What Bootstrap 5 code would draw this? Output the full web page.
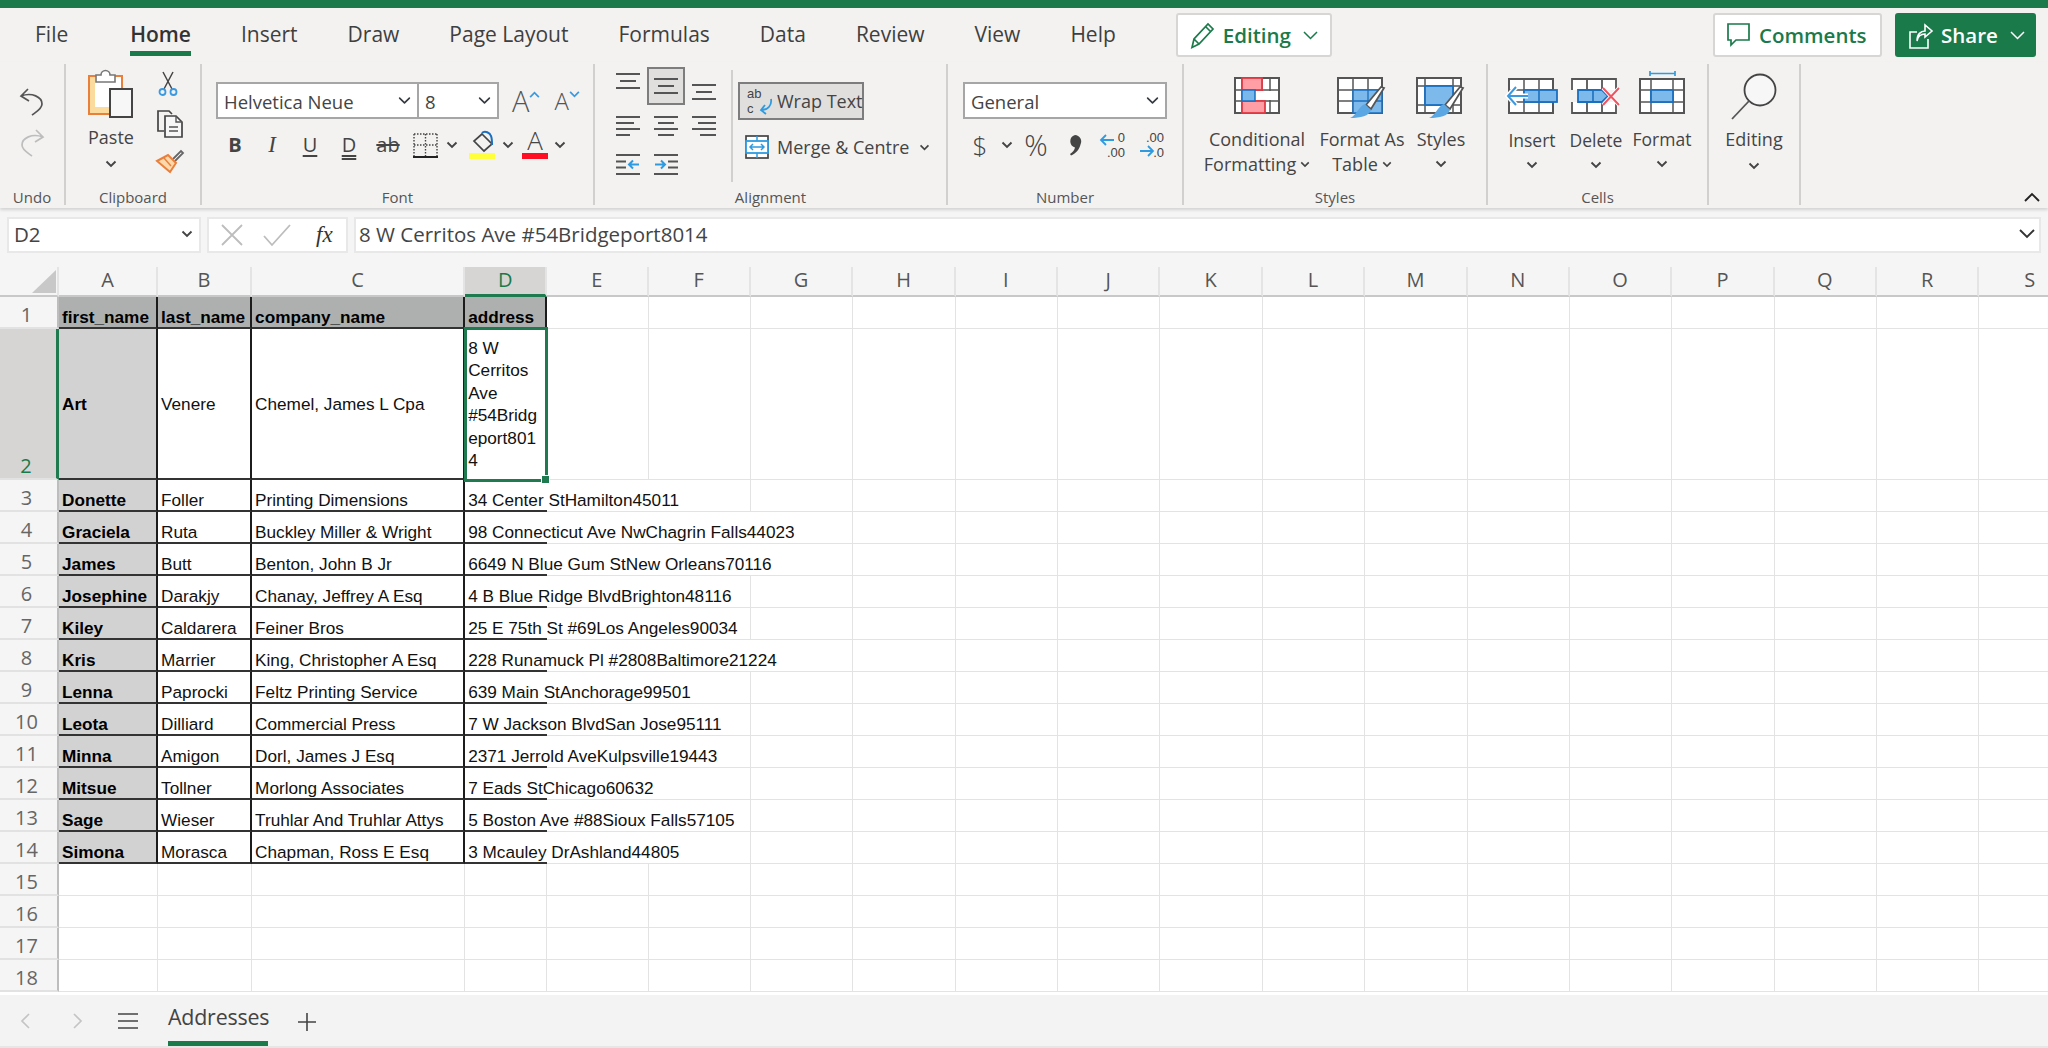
<!DOCTYPE html>
<html lang="en">
<head>
<meta charset="utf-8">
<title>Addresses - Excel</title>
<link href="https://cdn.jsdelivr.net/npm/bootstrap@5.3.0/dist/css/bootstrap.min.css" rel="stylesheet">
<style>
html,body{height:100%;overflow:hidden}
body{background:#f3f2f1;font-family:"Open Sans","Noto Sans",sans-serif;color:#444;width:2048px;height:1048px}
svg{display:block;flex:none;overflow:visible}
.topbar{height:8px;background:#1a7a4a}
.tabrow{height:54px}
.tabrow .nav-link{padding:13px 25px 0;color:#3f3f3f;font-size:21px;line-height:26px;height:54px}
.tabrow .first-tab{margin-left:10px}
.tabrow .home-tab{margin-left:12px;font-weight:600;color:#333;padding-top:10px}
.tab-ink{display:block;height:38px;padding-top:3px;border-bottom:5px solid #1a7a4a}
.tbtn{height:44px;margin-top:5px;padding:0 12px;font-size:20.5px;font-weight:600;border-radius:3px;color:#1a7a4a;background:#fff;border:2px solid #d8d6d4;display:flex;align-items:center}
.tbtn:hover{color:#1a7a4a;background:#fff;border-color:#d8d6d4}
.btn-edit{width:156px;margin-left:35px}
.btn-comm{width:169px;margin-left:auto}
.btn-share{width:141px;margin:5px 12px 0 13px;background:#1a7a4a;border-color:#1a7a4a;color:#fff}
.btn-share:hover{background:#1a7a4a;color:#fff}
.ribbon{height:146px;padding-top:2px;box-shadow:0 2px 3px rgba(0,0,0,.14);position:relative;z-index:2}
.grp{height:141px;border-right:2px solid #d2d0ce;flex:none;display:flex;flex-direction:column}
.grp-body{flex:1 1 auto;display:flex;min-height:0}
.grp-lbl{height:14px;line-height:12px;text-align:center;font-size:15px;color:#555}
.g-undo{width:66px}.g-clip{width:136px}.g-font{width:393px}.g-align{width:353px}.g-num{width:236px}.g-style{width:304px}.g-cell{width:221px}.g-edit{width:92px}
.rib-txt{font-size:18px;line-height:25px;color:#444;white-space:nowrap;text-align:center}
.rib-sm{font-size:17.5px}
.col-paste{width:90px}.col-cb{width:24px}
.fsel{height:37px;padding:1px 0 0 6px;line-height:33px;font-size:18.5px;color:#444;border:2px solid #a6a6a6;border-radius:0;background-size:13px;background-position:right 6px center;white-space:nowrap}
.fs-name{width:203px}.fs-size{width:82px;margin-left:-2px}.fs-num{width:204px}
.grow-a{font-size:29px;line-height:31px;font-weight:300;color:#555}
.shrink-a{font-size:24px;line-height:31px;font-weight:300;color:#555}
.frow{height:30px;margin-top:11px;display:flex;align-items:center}
.ficon{width:24px;text-align:center;font-size:20px;line-height:30px;color:#444;font-family:"Open Sans",sans-serif}
.t-b{font-weight:700}.t-i{font-family:"Liberation Serif",serif;font-style:italic;font-size:23px}
.t-u{text-decoration:underline;text-underline-offset:3px}
.t-d{text-decoration:underline double;text-underline-offset:3px}
.t-s{text-decoration:line-through;width:32px}
.ngl{font-size:26px;line-height:30px;color:#444;width:24px;text-align:center;font-weight:300}
.ngl-w{width:30px;font-size:29px}
.agrid{display:grid;grid-template-columns:repeat(3,38px);grid-template-rows:repeat(3,39px);width:114px;height:117px;margin:3px 0 0 14px}
.acell{display:flex;justify-content:center;align-items:center}
.acell-top{align-items:flex-start;padding-top:6px}
.acell-bot{align-items:flex-start;padding-top:17px}
.acell-on{background:#e1dfdd;border:2px solid #7d7d7d;height:38px}
.asep{width:2px;height:112px;margin:6px 0 0 8px;background:#d2d0ce}
.wrap-btn{width:126px;height:38px;background:#e1dfdd;border:2px solid #7d7d7d;display:flex;align-items:center;padding-left:6px;margin-top:18px}
.merge-row{display:flex;align-items:center;margin:14px 0 0 7px;height:26px}
.f18{font-size:18px;color:#444;white-space:nowrap;line-height:26px}
.formula{height:59px;padding:9px 7px 0;background:#f5f5f5}
.fbox{height:36px;background:#fff;border:2px solid #e8e8e8;display:flex;align-items:center;font-size:20.5px;color:#444;line-height:28px;padding-bottom:2px}
.fb-name{width:194px;padding:0 6px 2px 5px;justify-content:space-between}
.fb-tool{width:141px;margin-left:6px;padding:0 0 0 12px}
.fb-input{flex:1 1 auto;margin-left:6px;padding:0 4px 2px 3px;justify-content:space-between;min-width:0}
.fx-t{font-family:"Liberation Serif",serif;font-style:italic;font-size:23px;margin-left:25px;color:#333}
.sheetwrap{height:728px;overflow:hidden;background:#fff;position:relative}
.sheet-tbl{table-layout:fixed;border-collapse:separate;border-spacing:0;width:2082px;font-family:"Liberation Sans",Arial,sans-serif;font-size:17.2px;color:#111}
.sheet-tbl td,.sheet-tbl th{padding:0 2px 1px 3px;vertical-align:bottom;white-space:nowrap;border-right:1px solid #e3e3e3;border-bottom:1px solid #e3e3e3;line-height:18px;font-weight:400;overflow:visible}
.sheet-tbl th.ch{background:#f5f5f5;font-family:"Open Sans",sans-serif;font-size:20px;line-height:24px;padding:0 0 2px;color:#555;text-align:center;vertical-align:middle;border-right:2px solid #e4e4e4;border-bottom:2px solid #c8c8c8}
.sheet-tbl th.ch-sel{background:#d6d5d3;color:#1a7a4a;border-bottom:3px solid #1f7a50}
.sheet-tbl th.corner{background:#f5f5f5;padding:0;border-right:2px solid #e4e4e4;border-bottom:2px solid #c8c8c8}
.sheet-tbl th.rh{background:#f5f5f5;font-family:"Open Sans",sans-serif;font-size:20px;line-height:25px;color:#666;text-align:center;padding:0 4px 0 0;border-right:2px solid #bdbdbd;border-bottom:2px solid #e2e2e2}
.sheet-tbl th.rh-sel{background:#d6d5d3;color:#1a7a4a;border-right:3px solid #1f7a50}
.r-h1{height:32px}.r-h2{height:151px}.r-n{height:32px}.r-c{height:30px}
.sheet-tbl td.bx{border-right:2px solid #1c1c1c;border-bottom:2px solid #333}
.sheet-tbl td.hd{background:#aeb0af;font-weight:700;color:#000}
.sheet-tbl td.nm{background:#d2d2d2;font-weight:700;color:#000}
.sheet-tbl td.ad{border-right:0;border-bottom:2px solid #333}
.sheet-tbl td.ov{border-right:0}
.sheet-tbl td.mid{vertical-align:middle;padding-bottom:0}
.sheet-tbl td.d2{position:relative;border-right:0;border-bottom:0;vertical-align:middle;padding-bottom:1px;line-height:22.5px;white-space:normal}
.sel-box{position:absolute;left:-1px;top:-2px;right:-1px;bottom:-2px;border:3px solid #1f7a50;pointer-events:none}
.sel-hdl{position:absolute;right:-5px;bottom:-5px;width:9px;height:9px;background:#1f7a50;border:1px solid #fff}
.footbar{height:53px;background:#f3f3f3;border-bottom:2px solid #e6e6e6;display:flex}
.sheet-tab{margin-left:30px;width:100px;height:51px;font-size:21.4px;line-height:44px;color:#444;border-bottom:5px solid #1a7a4a;text-align:center;white-space:nowrap;letter-spacing:-.2px}
.foot-next{margin-left:43px}.foot-menu{margin-left:35px}.foot-add{margin-left:30px}
.cw-rh{width:59px}.cw-a{width:99px}.cw-b{width:94px}.cw-c{width:213px}.cw-d{width:82px}.cw-e{width:101.350px}.cw-x{width:102.350px}
.ml3{margin-left:3px}.ml4{margin-left:4px}.ml5{margin-left:5px}.ml6{margin-left:6px}.ml7{margin-left:7px}.ml8{margin-left:8px}.ml9{margin-left:9px}.ml10{margin-left:10px}.ml11{margin-left:11px}.ml12{margin-left:12px}.ml13{margin-left:13px}.ml14{margin-left:14px}.ml15{margin-left:15px}.ml20{margin-left:20px}.ml26{margin-left:26px}
.pl14{padding-left:14px}.pl15{padding-left:15px}
.mt5{margin-top:5px}.mt7{margin-top:7px}.mt10{margin-top:10px}.mt13{margin-top:13px}.mt14{margin-top:14px}.mt18{margin-top:18px}.mt24{margin-top:24px}
.mt6{margin-top:6px}.mt8{margin-top:8px}
.w94{width:94px}.w88{width:88px}.w52{width:52px}.w60{width:60px}
.ls-col{display:flex;flex-direction:column;align-items:center}
.collapse-up{flex:1 1 auto;display:flex;align-items:flex-end;justify-content:flex-end;padding:0 8px 6px 0}
</style>
</head>
<body>
<svg class="d-none" aria-hidden="true">
  <symbol id="chv" viewBox="0 0 12 8"><path d="M1.5 1.5 6 6l4.5-4.5" fill="none" stroke="#444" stroke-width="1.9"/></symbol>
  <symbol id="ln-c" viewBox="0 0 24 16"><path d="M0 1h24M4 8h16M0 15h24" fill="none" stroke="#555" stroke-width="2"/></symbol>
  <symbol id="ln-l" viewBox="0 0 24 20"><path d="M0 1h24M0 7h18M0 13h24M0 19h14" fill="none" stroke="#555" stroke-width="2"/></symbol>
  <symbol id="ln-m" viewBox="0 0 24 20"><path d="M0 1h24M4 7h16M0 13h24M4 19h16" fill="none" stroke="#555" stroke-width="2"/></symbol>
  <symbol id="ln-r" viewBox="0 0 24 20"><path d="M0 1h24M6 7h18M0 13h24M8 19h16" fill="none" stroke="#555" stroke-width="2"/></symbol>
  <symbol id="brush" viewBox="0 0 50 42"><path d="M47 11 34 32l-5-4L44 10z" fill="#fff" stroke="#555" stroke-width="1.8"/><path d="M28 27l6 6c-2 6-10 8-21 8 6-2 9-12 15-14z" fill="#5ba7e4"/></symbol>
</svg>

<div class="topbar"></div>

<div class="tabrow d-flex">
  <ul class="nav flex-nowrap">
    <li class="nav-item"><a class="nav-link first-tab" href="#">File</a></li>
    <li class="nav-item"><a class="nav-link home-tab" href="#"><span class="tab-ink">Home</span></a></li>
    <li class="nav-item"><a class="nav-link" href="#">Insert</a></li>
    <li class="nav-item"><a class="nav-link" href="#">Draw</a></li>
    <li class="nav-item"><a class="nav-link" href="#">Page Layout</a></li>
    <li class="nav-item"><a class="nav-link" href="#">Formulas</a></li>
    <li class="nav-item"><a class="nav-link" href="#">Data</a></li>
    <li class="nav-item"><a class="nav-link" href="#">Review</a></li>
    <li class="nav-item"><a class="nav-link" href="#">View</a></li>
    <li class="nav-item"><a class="nav-link" href="#">Help</a></li>
  </ul>
  <button class="btn tbtn btn-edit gap-2" type="button">
    <svg width="25" height="28" viewBox="0 0 25 28"><path d="M2 26.5 4 18 18 3l5 5L9 23zM15.5 5.5l5 5M4 18l5 5" fill="none" stroke="#1a7a4a" stroke-width="1.7"/></svg>
    Editing
    <svg class="ml4" width="15" height="9" viewBox="0 0 15 9"><path d="M1 1l6.5 6.5L14 1" fill="none" stroke="#1a7a4a" stroke-width="1.5"/></svg>
  </button>
  <button class="btn tbtn btn-comm gap-2" type="button">
    <svg width="24" height="24" viewBox="0 0 24 24"><path d="M1 1h21v16H9l-5 5v-5H1z" fill="none" stroke="#1a7a4a" stroke-width="1.7"/></svg>
    Comments
  </button>
  <button class="btn tbtn btn-share gap-2" type="button">
    <svg width="24" height="28" viewBox="0 0 24 28"><path d="M8 11H1v16h18v-9M8 20c0-7 4-10 8-10V4l7 6-7 6v-3c-4 0-7 2-8 7z" fill="none" stroke="#fff" stroke-width="1.6"/></svg>
    Share
    <svg class="ml4" width="15" height="9" viewBox="0 0 15 9"><path d="M1 1l6.5 6.5L14 1" fill="none" stroke="#fff" stroke-width="1.5"/></svg>
  </button>
</div>

<div class="ribbon d-flex">
  <!-- Undo -->
  <div class="grp g-undo">
    <div class="grp-body ls-col">
      <svg class="mt24" width="26" height="28" viewBox="0 0 26 28"><path d="M9 1 2 8l8 5M2 8c11-4 21 1 21 8 0 5-6 8-10 11" fill="none" stroke="#555" stroke-width="1.7"/></svg>
      <svg class="mt13" width="26" height="28" viewBox="0 0 26 28"><path d="M17 1l7 7-8 5M24 8C13 4 3 9 3 16c0 5 6 8 10 11" fill="none" stroke="#bdbdbd" stroke-width="1.7"/></svg>
    </div>
    <div class="grp-lbl">Undo</div>
  </div>
  <!-- Clipboard -->
  <div class="grp g-clip">
    <div class="grp-body">
      <div class="col-paste ls-col">
        <svg class="mt5" width="48" height="50" viewBox="0 0 48 50">
          <rect x="2" y="7" width="33" height="38" fill="#fff" stroke="#e8803c" stroke-width="2"/>
          <path d="M3 8h5v30h26v6H3z" fill="#fbdc9e"/>
          <path d="M9 13V6h5a4.5 4.5 0 0 1 9 0h5v7z" fill="#fff" stroke="#777" stroke-width="1.6"/>
          <rect x="23" y="20" width="22" height="28" fill="#f7f7f7" stroke="#444" stroke-width="2"/>
        </svg>
        <div class="rib-txt mt6">Paste</div>
        <svg class="mt10" width="12" height="8"><use href="#chv"/></svg>
      </div>
      <div class="col-cb ls-col">
        <svg class="mt7" width="20" height="26" viewBox="0 0 20 26"><path d="M5 1l9 17M15 1 6 18" fill="none" stroke="#444" stroke-width="1.5"/><circle cx="4.5" cy="21" r="3" fill="none" stroke="#3b99e0" stroke-width="1.8"/><circle cx="15.5" cy="21" r="3" fill="none" stroke="#3b99e0" stroke-width="1.8"/></svg>
        <svg class="ml4 mt13" width="28" height="28" viewBox="0 0 28 28"><path d="M8 21H2V1h11l3 3" fill="none" stroke="#444" stroke-width="1.7"/><path d="M9 6h11l6 6v15H9z" fill="#f7f7f7" stroke="#444" stroke-width="1.7"/><path d="M20 6v6h6M13 17h9M13 21h9" fill="none" stroke="#555" stroke-width="1.4"/></svg>
        <svg class="ml4 mt10" width="28" height="25" viewBox="0 0 28 25"><path d="M17 11l8-8 2 2-8 8" fill="#fff" stroke="#666" stroke-width="1.8"/><path d="M1 13l11-6 8 8-6 9z" fill="#fcd9ac" stroke="#e8803c" stroke-width="2"/><path d="M8 10l7 8" stroke="#e8803c" stroke-width="1.5"/></svg>
      </div>
    </div>
    <div class="grp-lbl">Clipboard</div>
  </div>
  <!-- Font -->
  <div class="grp g-font">
    <div class="grp-body flex-column pl14">
      <div class="d-flex mt18 align-items-center">
        <div class="form-select fsel fs-name">Helvetica Neue</div>
        <div class="form-select fsel fs-size">8</div>
        <div class="grow-a ml13 d-flex">A<svg class="mt6" width="11" height="7" viewBox="0 0 12 8"><path d="M1 7l5-5 5 5" fill="none" stroke="#3b99e0" stroke-width="2"/></svg></div>
        <div class="shrink-a ml14 d-flex">A<svg class="mt6" width="11" height="7" viewBox="0 0 12 8"><path d="M1 1l5 5 5-5" fill="none" stroke="#3b99e0" stroke-width="2"/></svg></div>
      </div>
      <div class="frow">
        <span class="ficon t-b ml7">B</span>
        <span class="ficon t-i ml13">I</span>
        <span class="ficon t-u ml14">U</span>
        <span class="ficon t-d ml15">D</span>
        <span class="ficon t-s ml11">ab</span>
        <svg class="ml9" width="25" height="25" viewBox="0 0 25 25"><path d="M1 1h23M1 1v22M24 1v22M12.500 1v22M1 12h23" fill="none" stroke="#444" stroke-width="1.4" stroke-dasharray="1.500 1.500"/><path d="M0 24h25" stroke="#222" stroke-width="2"/></svg>
        <svg class="ml8" width="12" height="8"><use href="#chv"/></svg>
        <svg class="ml11" width="26" height="30" viewBox="0 0 26 30"><path d="M13 4 23 14l-8 7-10-10z" fill="none" stroke="#444" stroke-width="1.7"/><path d="M13 3c3-3 8 0 9 3 1 2 1 5 1 9" fill="none" stroke="#1a6fbf" stroke-width="2"/><rect y="23" width="26" height="6" fill="#ffff3b"/></svg>
        <svg class="ml7" width="12" height="8"><use href="#chv"/></svg>
        <svg class="ml8" width="26" height="30" viewBox="0 0 26 30"><text x="13" y="20" text-anchor="middle" font-family="Open Sans" font-size="26" font-weight="300" fill="#444">A</text><rect y="23" width="26" height="6" fill="#ff0d23"/></svg>
        <svg class="ml6" width="12" height="8"><use href="#chv"/></svg>
      </div>
    </div>
    <div class="grp-lbl">Font</div>
  </div>
  <!-- Alignment -->
  <div class="grp g-align">
    <div class="grp-body">
      <div class="agrid">
        <div class="acell acell-top"><svg width="24" height="16"><use href="#ln-c"/></svg></div>
        <div class="acell acell-on"><svg width="24" height="16"><use href="#ln-c"/></svg></div>
        <div class="acell acell-bot"><svg width="24" height="16"><use href="#ln-c"/></svg></div>
        <div class="acell"><svg width="24" height="20"><use href="#ln-l"/></svg></div>
        <div class="acell"><svg width="24" height="20"><use href="#ln-m"/></svg></div>
        <div class="acell"><svg width="24" height="20"><use href="#ln-r"/></svg></div>
        <div class="acell"><svg width="24" height="21" viewBox="0 0 24 21"><path d="M0 1h24M0 7.500h10M0 13.500h10M0 20h24" fill="none" stroke="#555" stroke-width="2"/><path d="M23 10.500H13M17 6.500l-4 4 4 4" fill="none" stroke="#2e9be0" stroke-width="2"/></svg></div>
        <div class="acell"><svg width="24" height="21" viewBox="0 0 24 21"><path d="M0 1h24M14 7.500h10M14 13.500h10M0 20h24" fill="none" stroke="#555" stroke-width="2"/><path d="M1 10.500h10M7 6.500l4 4-4 4" fill="none" stroke="#2e9be0" stroke-width="2"/></svg></div>
      </div>
      <div class="asep"></div>
      <div class="ml5">
        <div class="wrap-btn">
          <svg width="28" height="30" viewBox="0 0 28 30"><text font-family="Liberation Sans" font-size="13" fill="#444"><tspan x="1" y="12">ab</tspan><tspan x="1" y="27">c</tspan></text><path d="M25 13c1 6-3 11-9 11M19 19l-4 5 5 4" fill="none" stroke="#2e9be0" stroke-width="1.800"/></svg>
          <span class="f18 ml3">Wrap Text</span>
        </div>
        <div class="merge-row">
          <svg width="24" height="24" viewBox="0 0 24 24"><rect x="1" y="1" width="22" height="22" fill="#fff" stroke="#444" stroke-width="1.700"/><rect x="1" y="6" width="22" height="12" fill="#fff" stroke="#2e9be0" stroke-width="1.800"/><path d="M5 12h14M8 9l-3 3 3 3M16 9l3 3-3 3M12 1v5M12 18v5" fill="none" stroke="#2e9be0" stroke-width="1.500"/></svg>
          <span class="f18 ml8">Merge &amp; Centre</span>
          <svg class="ml10" width="11" height="7"><use href="#chv"/></svg>
        </div>
      </div>
    </div>
    <div class="grp-lbl">Alignment</div>
  </div>
  <!-- Number -->
  <div class="grp g-num">
    <div class="grp-body flex-column pl15">
      <div class="form-select fsel fs-num mt18">General</div>
      <div class="frow">
        <span class="ngl ml5">$</span>
        <svg class="ml9" width="12" height="8"><use href="#chv"/></svg>
        <span class="ngl ngl-w ml8">%</span>
        <svg class="ml14" width="20" height="25" viewBox="0 0 20 25"><path d="M10 2a6.500 6.500 0 0 1 5.500 9.500c-1 5-5 9-9.500 11l-1-1.500c3-2 4.500-4 5-6.500A6.500 6.500 0 0 1 10 2z" fill="#444"/></svg>
        <svg class="ml15" width="25" height="30" viewBox="0 0 25 30"><path d="M14 10H1M6 5l-5 5 5 5" fill="none" stroke="#2e9be0" stroke-width="1.800"/><text text-anchor="end" font-family="Liberation Sans" font-size="13" fill="#444"><tspan x="25" y="12">0</tspan><tspan x="25" y="27">.00</tspan></text></svg>
        <svg class="ml15" width="25" height="30" viewBox="0 0 25 30"><path d="M0 21h13M8 16l5 5-5 5" fill="none" stroke="#2e9be0" stroke-width="1.800"/><text text-anchor="end" font-family="Liberation Sans" font-size="13" fill="#444"><tspan x="24" y="12">.00</tspan><tspan x="24" y="27">.0</tspan></text></svg>
      </div>
    </div>
    <div class="grp-lbl">Number</div>
  </div>
  <!-- Styles -->
  <div class="grp g-style">
    <div class="grp-body">
      <div class="ls-col w94 ml26">
        <svg class="mt13" width="46" height="37" viewBox="0 0 46 37"><rect x="1" y="1" width="44" height="35" fill="#fff" stroke="#555" stroke-width="2"/><path d="M8 1v35M28 1v35M36 1v35M1 13h44M1 24h44" stroke="#555" stroke-width="1.500"/><rect x="8" y="1" width="20" height="12" fill="#ff9ea5" stroke="#e03a45" stroke-width="1.800"/><rect x="8" y="24" width="23" height="12" fill="#ff9ea5" stroke="#e03a45" stroke-width="1.800"/><rect x="8" y="13" width="13" height="11" fill="#7ab7eb" stroke="#1a6fbf" stroke-width="1.500"/><rect x="22" y="14" width="22" height="9" fill="#fff"/></svg>
        <div class="rib-txt mt13">Conditional</div>
        <div class="rib-txt d-flex align-items-center">Formatting<svg class="ml4" width="10" height="7"><use href="#chv"/></svg></div>
      </div>
      <div class="ls-col w88 ml14">
        <svg class="mt13" width="50" height="42" viewBox="0 0 50 42"><rect x="1" y="1" width="44" height="35" fill="#fff" stroke="#555" stroke-width="2"/><path d="M16 1v35M31 1v35M1 13h44M1 24h44" stroke="#555" stroke-width="1.500"/><rect x="16" y="13" width="29" height="23" fill="#7eb9ec" stroke="#1a6fbf" stroke-width="1.500"/><path d="M31 13v23M16 24h29" stroke="#1a6fbf" stroke-width="1.300"/><use href="#brush" width="50" height="42"/></svg>
        <div class="rib-txt mt8">Format As</div>
        <div class="rib-txt d-flex align-items-center">Table<svg class="ml4" width="10" height="7"><use href="#chv"/></svg></div>
      </div>
      <div class="ls-col w52 ml9">
        <svg class="mt13" width="50" height="42" viewBox="0 0 50 42"><rect x="1" y="1" width="44" height="35" fill="#fff" stroke="#555" stroke-width="2"/><path d="M9 1v35M37 1v35M1 9h44M1 28h44" stroke="#555" stroke-width="1.500"/><rect x="9" y="9" width="28" height="19" fill="#7eb9ec" stroke="#1a6fbf" stroke-width="1.800"/><use href="#brush" width="50" height="42"/></svg>
        <div class="rib-txt mt8">Styles</div>
        <svg class="mt8" width="12" height="8"><use href="#chv"/></svg>
      </div>
    </div>
    <div class="grp-lbl">Styles</div>
  </div>
  <!-- Cells -->
  <div class="grp g-cell">
    <div class="grp-body">
      <div class="ls-col w60 ml14">
        <svg class="mt6" width="52" height="44" viewBox="0 0 52 44"><rect x="3" y="9" width="44" height="34" fill="#fff" stroke="#555" stroke-width="2"/><path d="M18 9v34M33 9v34M3 20h44M3 32h44" stroke="#555" stroke-width="1.500"/><rect x="18" y="20" width="33" height="12" fill="#7eb9ec" stroke="#1a6fbf" stroke-width="1.800"/><path d="M33 20v12" stroke="#1a6fbf" stroke-width="1.600"/><path d="M22 26H2M10 17l-8 9 8 9" fill="none" stroke="#fff" stroke-width="5"/><path d="M22 26H2M10 17l-8 9 8 9" fill="none" stroke="#3b99e0" stroke-width="2"/></svg>
        <div class="rib-txt rib-sm mt14">Insert</div>
        <svg class="mt8" width="12" height="8"><use href="#chv"/></svg>
      </div>
      <div class="ls-col w60 ml4">
        <svg class="mt6" width="50" height="44" viewBox="0 0 50 44"><path d="M1 20V9h44v11M1 32v11h44V32M16 9v11M31 9v11M16 32v11M31 32v11" fill="#fff" stroke="#555" stroke-width="1.800"/><path d="M7 20h24l6 6-6 6H7z" fill="#7eb9ec" stroke="#1a6fbf" stroke-width="1.800"/><path d="M22 20v12" stroke="#1a6fbf" stroke-width="1.600"/><path d="M32 18l16 17M48 18 32 35" fill="none" stroke="#fff" stroke-width="4"/><path d="M32 18l16 17M48 18 32 35" fill="none" stroke="#ef5560" stroke-width="2"/></svg>
        <div class="rib-txt rib-sm mt14">Delete</div>
        <svg class="mt8" width="12" height="8"><use href="#chv"/></svg>
      </div>
      <div class="ls-col w60 ml6">
        <svg class="mt6" width="46" height="44" viewBox="0 0 46 44"><path d="M11 1v5M36 1v5M11 3.500h25" fill="none" stroke="#2e9be0" stroke-width="1.700"/><rect x="1" y="9" width="44" height="34" fill="#fff" stroke="#555" stroke-width="2"/><path d="M12 9v34M34 9v34M1 20h44M1 32h44" stroke="#555" stroke-width="1.500"/><rect x="12" y="20" width="22" height="12" fill="#7eb9ec" stroke="#1a6fbf" stroke-width="1.800"/></svg>
        <div class="rib-txt rib-sm mt13">Format</div>
        <svg class="mt8" width="12" height="8"><use href="#chv"/></svg>
      </div>
    </div>
    <div class="grp-lbl">Cells</div>
  </div>
  <!-- Editing -->
  <div class="grp g-edit">
    <div class="grp-body ls-col">
      <svg class="mt10" width="46" height="46" viewBox="0 0 46 46"><circle cx="29" cy="16" r="15.500" fill="#f7f7f7" stroke="#444" stroke-width="1.800"/><path d="M18 27 1 45" stroke="#555" stroke-width="1.800"/></svg>
      <div class="rib-txt mt7">Editing</div>
      <svg class="mt10" width="12" height="8"><use href="#chv"/></svg>
    </div>
  </div>
  <div class="collapse-up">
    <svg width="16" height="10" viewBox="0 0 16 10"><path d="M1 9l7-7 7 7" fill="none" stroke="#222" stroke-width="1.900"/></svg>
  </div>
</div>

<div class="formula d-flex">
  <div class="fbox fb-name"><span>D2</span><svg width="12" height="8"><use href="#chv"/></svg></div>
  <div class="fbox fb-tool">
    <svg width="22" height="22" viewBox="0 0 22 22"><path d="M1 1l20 20M21 1 1 21" fill="none" stroke="#bdbdbd" stroke-width="1.800"/></svg>
    <svg class="ml20" width="28" height="22" viewBox="0 0 28 22"><path d="M1 12l8 9L27 1" fill="none" stroke="#bdbdbd" stroke-width="1.800"/></svg>
    <span class="fx-t">fx</span>
  </div>
  <div class="fbox fb-input"><span>8 W Cerritos Ave #54Bridgeport8014</span><svg width="16" height="10" viewBox="0 0 16 10"><path d="M1 1l7 7 7-7" fill="none" stroke="#333" stroke-width="1.900"/></svg></div>
</div>

<div class="sheetwrap">
<table class="sheet-tbl">
<colgroup><col class="cw-rh"><col class="cw-a"><col class="cw-b"><col class="cw-c"><col class="cw-d"><col class="cw-e"><col span="14" class="cw-x"></colgroup>
<thead>
<tr class="r-c">
<th class="corner"><svg class="ms-auto" width="55" height="28" viewBox="0 0 55 28"><path d="M54 3v23H30z" fill="#c8c8c8"/></svg></th>
<th class="ch">A</th><th class="ch">B</th><th class="ch">C</th><th class="ch ch-sel">D</th><th class="ch">E</th><th class="ch">F</th><th class="ch">G</th><th class="ch">H</th><th class="ch">I</th><th class="ch">J</th><th class="ch">K</th><th class="ch">L</th><th class="ch">M</th><th class="ch">N</th><th class="ch">O</th><th class="ch">P</th><th class="ch">Q</th><th class="ch">R</th><th class="ch">S</th>
</tr>
</thead>
<tbody>
<tr class="r-h1"><th class="rh">1</th><td class="bx hd">first_name</td><td class="bx hd">last_name</td><td class="bx hd">company_name</td><td class="bx hd">address</td><td></td><td></td><td></td><td></td><td></td><td></td><td></td><td></td><td></td><td></td><td></td><td></td><td></td><td></td><td></td></tr>
<tr class="r-h2"><th class="rh rh-sel">2</th><td class="bx nm mid">Art</td><td class="bx mid">Venere</td><td class="bx mid">Chemel, James L Cpa</td><td class="d2">8 W<br>Cerritos<br>Ave<br>#54Bridg<br>eport801<br>4<span class="sel-box"><span class="sel-hdl"></span></span></td><td></td><td></td><td></td><td></td><td></td><td></td><td></td><td></td><td></td><td></td><td></td><td></td><td></td><td></td><td></td></tr>
<tr class="r-n"><th class="rh">3</th><td class="bx nm">Donette</td><td class="bx">Foller</td><td class="bx">Printing Dimensions</td><td class="ad">34 Center StHamilton45011</td><td class="ov"></td><td></td><td></td><td></td><td></td><td></td><td></td><td></td><td></td><td></td><td></td><td></td><td></td><td></td><td></td></tr>
<tr class="r-n"><th class="rh">4</th><td class="bx nm">Graciela</td><td class="bx">Ruta</td><td class="bx">Buckley Miller &amp; Wright</td><td class="ad">98 Connecticut Ave NwChagrin Falls44023</td><td class="ov"></td><td class="ov"></td><td></td><td></td><td></td><td></td><td></td><td></td><td></td><td></td><td></td><td></td><td></td><td></td><td></td></tr>
<tr class="r-n"><th class="rh">5</th><td class="bx nm">James</td><td class="bx">Butt</td><td class="bx">Benton, John B Jr</td><td class="ad">6649 N Blue Gum StNew Orleans70116</td><td class="ov"></td><td class="ov"></td><td></td><td></td><td></td><td></td><td></td><td></td><td></td><td></td><td></td><td></td><td></td><td></td><td></td></tr>
<tr class="r-n"><th class="rh">6</th><td class="bx nm">Josephine</td><td class="bx">Darakjy</td><td class="bx">Chanay, Jeffrey A Esq</td><td class="ad">4 B Blue Ridge BlvdBrighton48116</td><td class="ov"></td><td></td><td></td><td></td><td></td><td></td><td></td><td></td><td></td><td></td><td></td><td></td><td></td><td></td><td></td></tr>
<tr class="r-n"><th class="rh">7</th><td class="bx nm">Kiley</td><td class="bx">Caldarera</td><td class="bx">Feiner Bros</td><td class="ad">25 E 75th St #69Los Angeles90034</td><td class="ov"></td><td></td><td></td><td></td><td></td><td></td><td></td><td></td><td></td><td></td><td></td><td></td><td></td><td></td><td></td></tr>
<tr class="r-n"><th class="rh">8</th><td class="bx nm">Kris</td><td class="bx">Marrier</td><td class="bx">King, Christopher A Esq</td><td class="ad">228 Runamuck Pl #2808Baltimore21224</td><td class="ov"></td><td class="ov"></td><td></td><td></td><td></td><td></td><td></td><td></td><td></td><td></td><td></td><td></td><td></td><td></td><td></td></tr>
<tr class="r-n"><th class="rh">9</th><td class="bx nm">Lenna</td><td class="bx">Paprocki</td><td class="bx">Feltz Printing Service</td><td class="ad">639 Main StAnchorage99501</td><td class="ov"></td><td></td><td></td><td></td><td></td><td></td><td></td><td></td><td></td><td></td><td></td><td></td><td></td><td></td><td></td></tr>
<tr class="r-n"><th class="rh">10</th><td class="bx nm">Leota</td><td class="bx">Dilliard</td><td class="bx">Commercial Press</td><td class="ad">7 W Jackson BlvdSan Jose95111</td><td class="ov"></td><td></td><td></td><td></td><td></td><td></td><td></td><td></td><td></td><td></td><td></td><td></td><td></td><td></td><td></td></tr>
<tr class="r-n"><th class="rh">11</th><td class="bx nm">Minna</td><td class="bx">Amigon</td><td class="bx">Dorl, James J Esq</td><td class="ad">2371 Jerrold AveKulpsville19443</td><td class="ov"></td><td></td><td></td><td></td><td></td><td></td><td></td><td></td><td></td><td></td><td></td><td></td><td></td><td></td><td></td></tr>
<tr class="r-n"><th class="rh">12</th><td class="bx nm">Mitsue</td><td class="bx">Tollner</td><td class="bx">Morlong Associates</td><td class="ad">7 Eads StChicago60632</td><td class="ov"></td><td></td><td></td><td></td><td></td><td></td><td></td><td></td><td></td><td></td><td></td><td></td><td></td><td></td><td></td></tr>
<tr class="r-n"><th class="rh">13</th><td class="bx nm">Sage</td><td class="bx">Wieser</td><td class="bx">Truhlar And Truhlar Attys</td><td class="ad">5 Boston Ave #88Sioux Falls57105</td><td class="ov"></td><td></td><td></td><td></td><td></td><td></td><td></td><td></td><td></td><td></td><td></td><td></td><td></td><td></td><td></td></tr>
<tr class="r-n"><th class="rh">14</th><td class="bx nm">Simona</td><td class="bx">Morasca</td><td class="bx">Chapman, Ross E Esq</td><td class="ad">3 Mcauley DrAshland44805</td><td class="ov"></td><td></td><td></td><td></td><td></td><td></td><td></td><td></td><td></td><td></td><td></td><td></td><td></td><td></td><td></td></tr>
<tr class="r-n"><th class="rh">15</th><td></td><td></td><td></td><td></td><td></td><td></td><td></td><td></td><td></td><td></td><td></td><td></td><td></td><td></td><td></td><td></td><td></td><td></td><td></td></tr>
<tr class="r-n"><th class="rh">16</th><td></td><td></td><td></td><td></td><td></td><td></td><td></td><td></td><td></td><td></td><td></td><td></td><td></td><td></td><td></td><td></td><td></td><td></td><td></td></tr>
<tr class="r-n"><th class="rh">17</th><td></td><td></td><td></td><td></td><td></td><td></td><td></td><td></td><td></td><td></td><td></td><td></td><td></td><td></td><td></td><td></td><td></td><td></td><td></td></tr>
<tr class="r-n"><th class="rh">18</th><td></td><td></td><td></td><td></td><td></td><td></td><td></td><td></td><td></td><td></td><td></td><td></td><td></td><td></td><td></td><td></td><td></td><td></td><td></td></tr>
</tbody>
</table>
</div>

<div class="footbar">
  <svg class="ml20 mt18" width="10" height="16" viewBox="0 0 10 16"><path d="M9 1 2 8l7 7" fill="none" stroke="#c4c4c4" stroke-width="1.700"/></svg>
  <svg class="mt18 foot-next" width="10" height="16" viewBox="0 0 10 16"><path d="M1 1l7 7-7 7" fill="none" stroke="#c4c4c4" stroke-width="1.700"/></svg>
  <svg class="mt18 foot-menu" width="20" height="16" viewBox="0 0 20 16"><path d="M0 1h20M0 8h20M0 15h20" stroke="#444" stroke-width="1.700"/></svg>
  <div class="sheet-tab">Addresses</div>
  <svg class="mt18 foot-add" width="18" height="18" viewBox="0 0 18 18"><path d="M9 0v18M0 9h18" stroke="#444" stroke-width="1.600"/></svg>
</div>
<script src="https://cdn.jsdelivr.net/npm/bootstrap@5.3.0/dist/js/bootstrap.bundle.min.js"></script>
</body>
</html>
